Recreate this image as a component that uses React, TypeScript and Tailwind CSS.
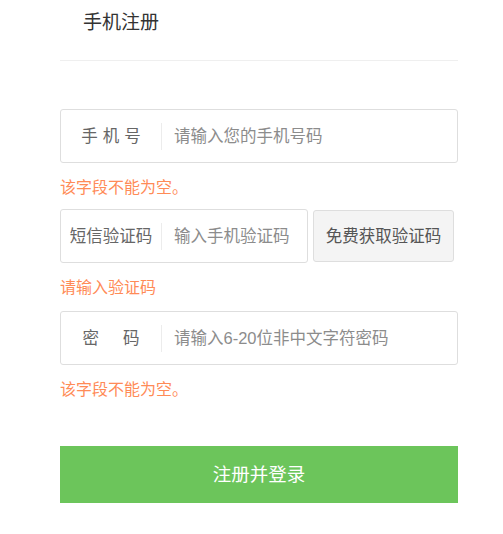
import React from 'react';

const font = "font-['Liberation_Sans','Noto_Sans_CJK_SC',sans-serif]";

interface FieldProps {
  label: React.ReactNode;
  placeholder: string;
  type?: string;
  className?: string;
}

const Field: React.FC<FieldProps> = ({ label, placeholder, type = 'text', className = '' }) => {
  return (
    <div className={`flex items-center h-[54px] border border-[#dedede] rounded-[3px] bg-white ${className}`}>
      <div className="w-[100px] shrink-0 flex justify-center text-[16.5px] text-[#666]">{label}</div>
      <div className="w-px h-[27px] bg-[#ececec]"></div>
      <input
        type={type}
        placeholder={placeholder}
        className="flex-1 min-w-0 h-full pl-[12px] pr-2 bg-transparent outline-none text-[16.5px] text-[#333] placeholder:text-[#8c8c8c]"
      />
    </div>
  );
};

const ErrorText: React.FC<{ children: React.ReactNode; className?: string }> = ({ children, className = 'mb-[9px]' }) => (
  <div className={`mt-[13px] h-6 leading-6 text-[16px] text-[#ff8b57] ${className}`}>{children}</div>
);

export default function App() {
  return (
    <div className={`${font} w-[503px] h-[534px] bg-white`}>
      <div className="ml-[60px] w-[398px]">
        <div className="h-[61px] border-b border-[#efefef] pl-[23px] pt-[9px] text-[19px] leading-7 text-[#333]">
          手机注册
        </div>

        <div className="pt-[48px]">
          <Field
            label={
              <span className="flex gap-[5px]">
                <span>手</span>
                <span>机</span>
                <span>号</span>
              </span>
            }
            placeholder="请输入您的手机号码"
          />
          <ErrorText>该字段不能为空。</ErrorText>

          <div className="flex items-center gap-[5px]">
            <Field label="短信验证码" placeholder="输入手机验证码" className="w-[248px]" />
            <button className="w-[141px] h-[52px] rounded-[3px] border border-[#dedede] bg-[#f4f4f4] text-[16.5px] text-[#555]">
              免费获取验证码
            </button>
          </div>
          <ErrorText className="mb-[11px]">请输入验证码</ErrorText>

          <Field
            label={
              <span className="flex gap-[24px]">
                <span>密</span>
                <span>码</span>
              </span>
            }
            placeholder="请输入6-20位非中文字符密码"
            type="password"
          />
          <ErrorText className="mb-0">该字段不能为空。</ErrorText>

          <button className="mt-[44px] w-full h-[57px] bg-[#6cc55b] text-white text-[18.5px]">
            注册并登录
          </button>
        </div>
      </div>
    </div>
  );
}
